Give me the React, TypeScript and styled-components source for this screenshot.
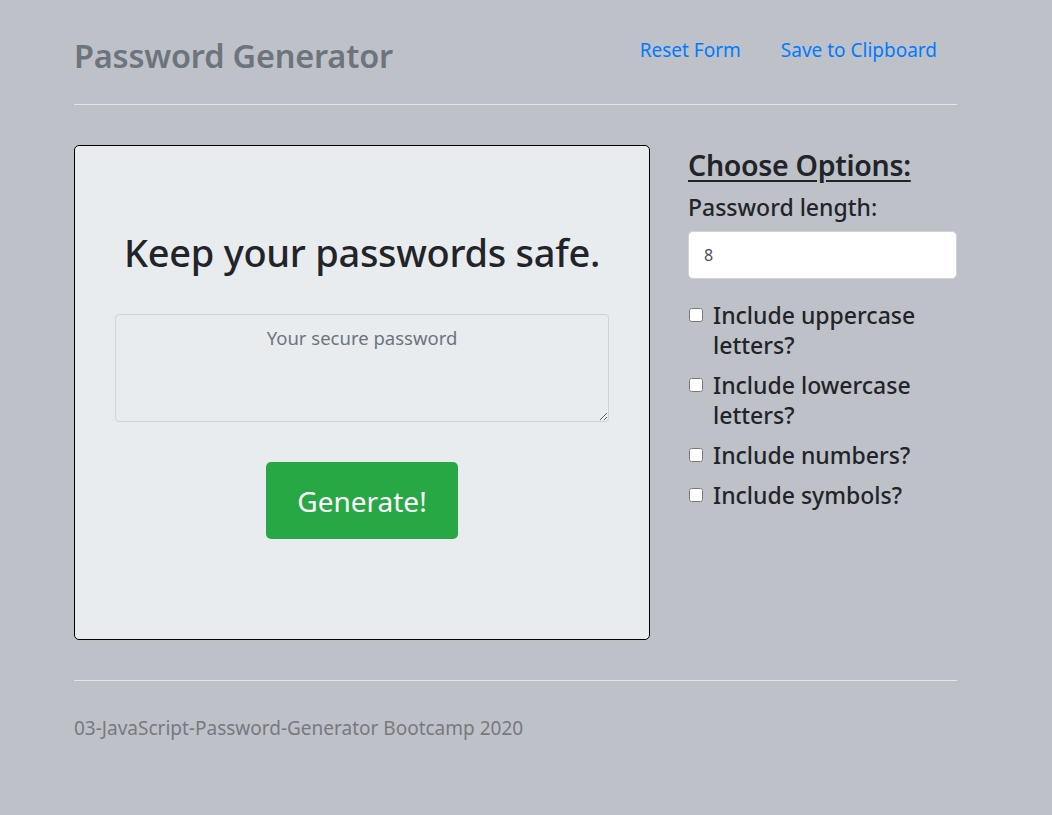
import * as React from 'react'
import styled, { createGlobalStyle } from 'styled-components'

const GlobalStyle = createGlobalStyle`
  html, body {
    margin: 0;
    padding: 0;
    background: #bfc1c8;
  }
  body {
    font-family: 'Noto Sans', 'Open Sans', sans-serif;
    color: #212529;
  }
  * {
    box-sizing: border-box;
  }
`

const options = [
  { id: 'upper', label: 'Include uppercase letters?' },
  { id: 'lower', label: 'Include lowercase letters?' },
  { id: 'numbers', label: 'Include numbers?' },
  { id: 'symbols', label: 'Include symbols?' }
]

export default function App() {
  const [length, setLength] = React.useState<string>('8')
  const [checked, setChecked] = React.useState<Record<string, boolean>>({})
  const toggle = (id: string) => setChecked({ ...checked, [id]: !checked[id] })

  return (
    <>
      <GlobalStyle />
      <Page>
        <Header>
          <Brand>Password Generator</Brand>
          <Nav>
            <NavLink href='#'>Reset Form</NavLink>
            <NavLink href='#'>Save to Clipboard</NavLink>
          </Nav>
        </Header>
        <Rule />
        <Main>
          <Card>
            <Heading>Keep your passwords safe.</Heading>
            <Output placeholder='Your secure password' readOnly />
            <GenerateButton type='button'>Generate!</GenerateButton>
          </Card>
          <Options>
            <OptionsTitle>Choose Options:</OptionsTitle>
            <FieldLabel htmlFor='length'>Password length:</FieldLabel>
            <LengthInput
              id='length'
              type='text'
              value={length}
              onChange={e => setLength(e.target.value)}
            />
            <CheckList>
              {options.map(o => (
                <CheckRow key={o.id}>
                  <Check
                    type='checkbox'
                    id={o.id}
                    checked={!!checked[o.id]}
                    onChange={() => toggle(o.id)}
                  />
                  <CheckLabel htmlFor={o.id}>{o.label}</CheckLabel>
                </CheckRow>
              ))}
            </CheckList>
          </Options>
        </Main>
        <Rule />
        <Footer>03-JavaScript-Password-Generator Bootcamp 2020</Footer>
      </Page>
    </>
  )
}

const Page = styled.div`
  width: 883px;
  margin-left: 74px;
  padding-top: 34px;
  padding-bottom: 60px;
`
const Header = styled.header`
  display: flex;
  align-items: flex-start;
  justify-content: space-between;
  height: 70px;
`
const Brand = styled.h1`
  margin: 0;
  font-size: 32.5px;
  font-weight: 600;
  line-height: 44px;
  color: #6c757d;
  letter-spacing: -0.2px;
`
const Nav = styled.nav`
  display: flex;
`
const NavLink = styled.a`
  padding: 0 20px;
  font-size: 19px;
  line-height: 32px;
  color: #007bff;
  text-decoration: none;
`
const Rule = styled.hr`
  margin: 0;
  border: 0;
  border-top: 1px solid #e3e5ea;
`
const Main = styled.main`
  display: grid;
  grid-template-columns: 576px 269px;
  column-gap: 38px;
  padding-top: 40px;
  padding-bottom: 40px;
`
const Card = styled.section`
  height: 495px;
  display: flex;
  flex-direction: column;
  align-items: center;
  padding: 81px 40px 0;
  background: #e9ecef;
  border: 1px solid #000;
  border-radius: 5px;
`
const Heading = styled.h2`
  margin: 0 0 37px;
  font-size: 38px;
  font-weight: 500;
  line-height: 50px;
  color: #212529;
  letter-spacing: -0.3px;
`
const Output = styled.textarea`
  width: 100%;
  height: 108px;
  padding: 9px 12px;
  font-family: inherit;
  font-size: 18.5px;
  line-height: 28px;
  text-align: center;
  background: #e9ecef;
  border: 1px solid #ced4da;
  border-radius: 4px;
  color: #495057;
  &::placeholder {
    color: #6c757d;
  }
`
const GenerateButton = styled.button`
  margin-top: 40px;
  width: 192px;
  height: 77px;
  font-family: inherit;
  font-size: 28px;
  color: #fff;
  background: #28a745;
  border: 0;
  border-radius: 5px;
  cursor: pointer;
`
const Options = styled.aside`
  display: flex;
  flex-direction: column;
`
const OptionsTitle = styled.h3`
  margin: 0;
  padding-top: 1px;
  font-size: 28.5px;
  font-weight: 600;
  line-height: 38px;
  text-decoration: underline;
  text-underline-offset: 4px;
  color: #212529;
  letter-spacing: -0.3px;
`
const FieldLabel = styled.label`
  margin-top: 6px;
  font-size: 23px;
  font-weight: 500;
  line-height: 34px;
`
const LengthInput = styled.input`
  margin-top: 7px;
  width: 100%;
  height: 48px;
  padding: 0 15px;
  font-family: inherit;
  font-size: 16px;
  color: #495057;
  background: #fff;
  border: 1px solid #ced4da;
  border-radius: 5px;
`
const CheckList = styled.div`
  display: flex;
  flex-direction: column;
  gap: 10px;
  margin-top: 21px;
`
const CheckRow = styled.div`
  display: flex;
  align-items: flex-start;
`
const Check = styled.input`
  width: 14px;
  height: 14px;
  margin: 8px 10px 0 1px;
  flex: none;
`
const CheckLabel = styled.label`
  font-size: 23px;
  font-weight: 500;
  line-height: 30px;
  color: #212529;
`
const Footer = styled.footer`
  padding-top: 34px;
  font-size: 19px;
  color: #767a80;
`
